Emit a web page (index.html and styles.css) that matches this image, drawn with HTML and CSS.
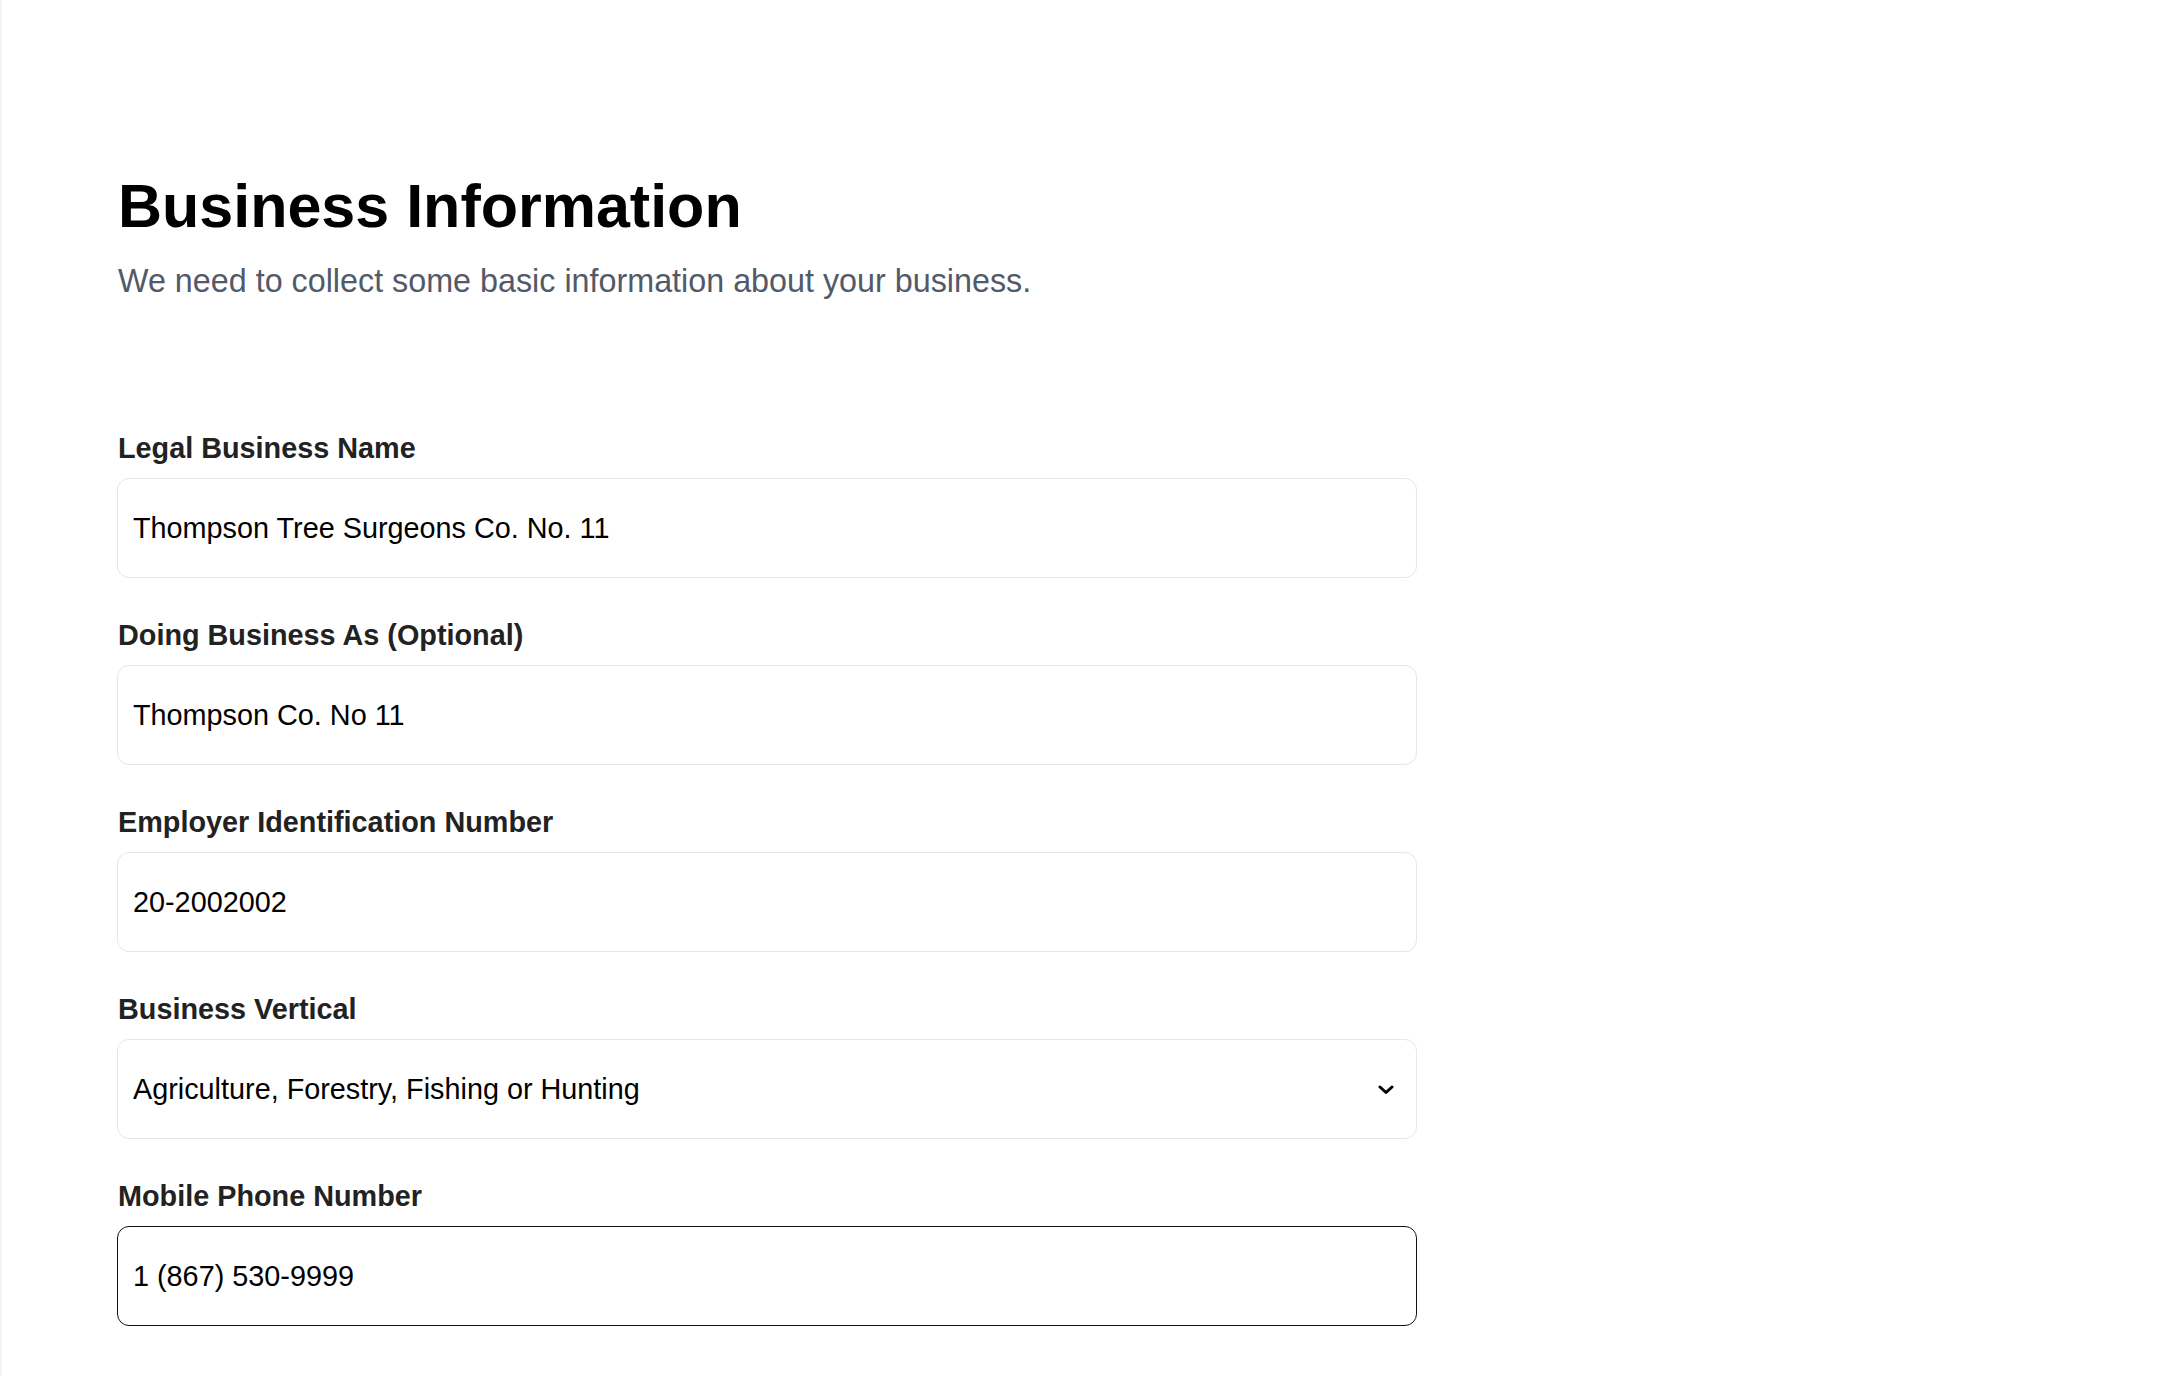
FILE: index.html
```html
<!DOCTYPE html>
<html lang="en">

<head>
    <meta charset="UTF-8">
    <meta name="viewport" content="width=device-width, initial-scale=1.0">
    <title>Business Information</title>
    <link rel="stylesheet" href="styles.css">
</head>

<body>

    <div class="page">
        <!-- page header -->
        <div class="header">
            <h1 class="title">Business Information</h1>
            <p class="subtitle">We need to collect some basic information about your business.</p>
        </div>

        <!-- form fields -->
        <form class="form">
            <div class="field">
                <label class="label" for="legal_name">Legal Business Name</label>
                <input class="input" id="legal_name" type="text" value="Thompson Tree Surgeons Co. No. 11" />
            </div>

            <div class="field">
                <label class="label" for="dba">Doing Business As (Optional)</label>
                <input class="input" id="dba" type="text" value="Thompson Co. No 11" />
            </div>

            <div class="field">
                <label class="label" for="ein">Employer Identification Number</label>
                <input class="input" id="ein" type="text" value="20-2002002" />
            </div>

            <div class="field">
                <label class="label" for="vertical">Business Vertical</label>
                <div class="select_wrap">
                    <select class="input select" id="vertical">
                        <option>Agriculture, Forestry, Fishing or Hunting</option>
                    </select>
                    <svg class="chevron" width="16" height="10" viewBox="0 0 16 10">
                        <path d="M2 2 L8 7.5 L14 2" fill="none" stroke="#000" stroke-width="3" stroke-linecap="round" stroke-linejoin="round" />
                    </svg>
                </div>
            </div>

            <div class="field">
                <label class="label" for="phone">Mobile Phone Number</label>
                <input class="input active" id="phone" type="text" value="1 (867) 530-9999" />
            </div>
        </form>
    </div>

</body>

</html>
```

FILE: styles.css
```css
* {
    margin: 0;
    padding: 0;
    box-sizing: border-box;
}

html,
body {
    background: #ffffff;
}

body {
    font-family: "Liberation Sans", Arial, Helvetica, sans-serif;
    color: #000000;
    min-height: 100vh;
    border-left: 2px solid #f3f4f6;
}

.page {
    padding: 170px 0 0 115px;
}

.title {
    font-size: 61px;
    line-height: 72px;
    font-weight: 700;
    color: #000000;
    margin-left: 1px;
}

.subtitle {
    margin-top: 15px;
    margin-left: 1px;
    font-size: 32.3px;
    line-height: 48px;
    color: #525a69;
}

.form {
    margin-top: 123px;
    width: 1300px;
    display: flex;
    flex-direction: column;
    gap: 37px;
}

.field {
    display: flex;
    flex-direction: column;
}

.label {
    font-size: 28.8px;
    line-height: 40px;
    font-weight: 700;
    color: #222222;
    margin-bottom: 10px;
    margin-left: 1px;
}

.input {
    width: 100%;
    height: 100px;
    padding: 0 15px;
    border: 1px solid #e6e6e6;
    border-radius: 12px;
    background: #ffffff;
    font-family: "Liberation Sans", Arial, Helvetica, sans-serif;
    font-size: 28.8px;
    color: #000000;
    outline: none;
}

.input.active {
    border-color: #111111;
}

.select_wrap {
    position: relative;
}

.select {
    appearance: none;
    -webkit-appearance: none;
}

.select_wrap .chevron {
    position: absolute;
    right: 23px;
    top: 50%;
    margin-top: -4px;
    pointer-events: none;
}
```
